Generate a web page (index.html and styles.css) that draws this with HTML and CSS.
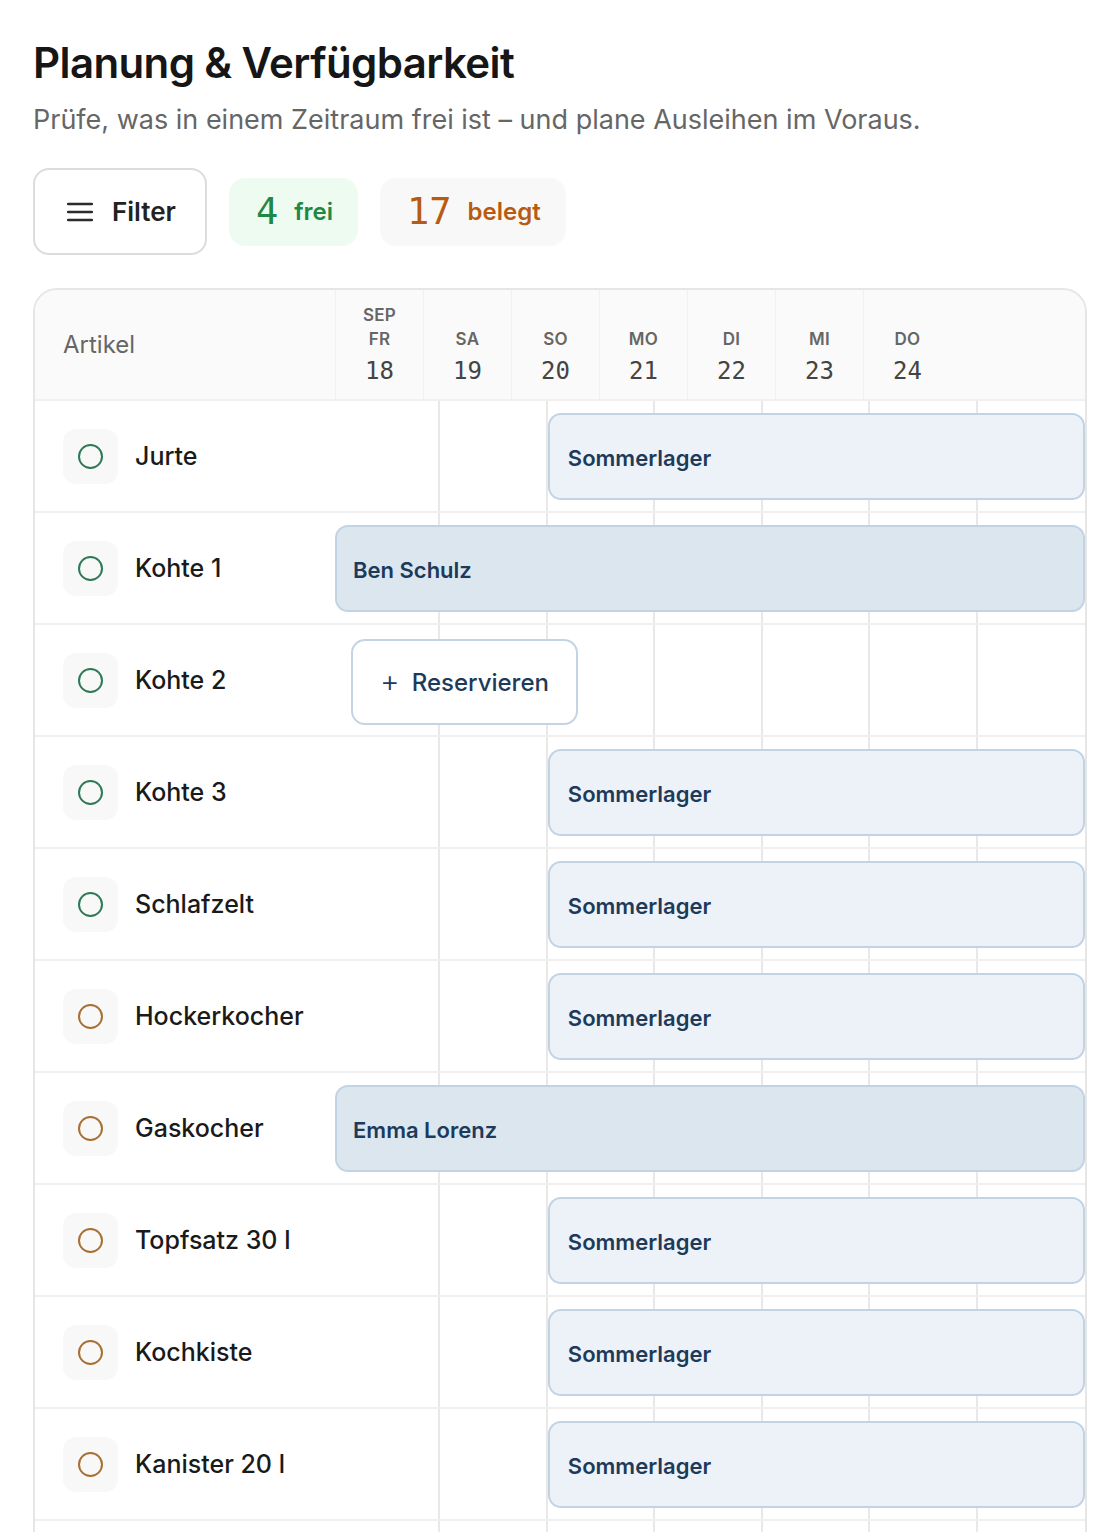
FILE: index.html
```html
<!DOCTYPE html>
<html lang="de">
<head>
<meta charset="utf-8">
<title>Planung &amp; Verfügbarkeit</title>
<link rel="stylesheet" href="styles.css">
</head>
<body>
<main class="page">
  <h1 class="title">Planung &amp; Verfügbarkeit</h1>
  <p class="subtitle">Prüfe, was in einem Zeitraum frei ist – und plane Ausleihen im Voraus.</p>

  <div class="toolbar">
    <button class="filter-btn" type="button">
      <svg class="menu-icon" width="26" height="20" viewBox="0 0 26 20" aria-hidden="true">
        <path d="M1 2h24M1 10h24M1 18h24" stroke="#2b2b2b" stroke-width="2.4" stroke-linecap="round" fill="none"/>
      </svg>
      <span>Filter</span>
    </button>
    <div class="stat stat-free"><span class="stat-num">4</span><span class="stat-label">frei</span></div>
    <div class="stat stat-busy"><span class="stat-num">17</span><span class="stat-label">belegt</span></div>
  </div>

  <section class="planner">
    <div class="planner-head">
      <div class="head-item">Artikel</div>
      <div class="head-day"><span class="mon">SEP</span><span class="wd">FR</span><span class="dn">18</span></div>
      <div class="head-day"><span class="wd">SA</span><span class="dn">19</span></div>
      <div class="head-day"><span class="wd">SO</span><span class="dn">20</span></div>
      <div class="head-day"><span class="wd">MO</span><span class="dn">21</span></div>
      <div class="head-day"><span class="wd">DI</span><span class="dn">22</span></div>
      <div class="head-day"><span class="wd">MI</span><span class="dn">23</span></div>
      <div class="head-day"><span class="wd">DO</span><span class="dn">24</span></div>
      <div class="head-rest"></div>
    </div>

    <div class="row">
      <div class="item"><span class="ico"><i class="ring ring-ok"></i></span><span class="name">Jurte</span></div>
      <div class="track">
        <i class="cell"></i><i class="cell"></i><i class="cell"></i><i class="cell"></i><i class="cell"></i><i class="cell"></i><i class="cell"></i>
        <div class="bar bar-event from-3">Sommerlager</div>
      </div>
    </div>

    <div class="row">
      <div class="item"><span class="ico"><i class="ring ring-ok"></i></span><span class="name">Kohte 1</span></div>
      <div class="track">
        <i class="cell"></i><i class="cell"></i><i class="cell"></i><i class="cell"></i><i class="cell"></i><i class="cell"></i><i class="cell"></i>
        <div class="bar bar-person from-1">Ben Schulz</div>
      </div>
    </div>

    <div class="row">
      <div class="item"><span class="ico"><i class="ring ring-ok"></i></span><span class="name">Kohte 2</span></div>
      <div class="track">
        <i class="cell"></i><i class="cell"></i><i class="cell"></i><i class="cell"></i><i class="cell"></i><i class="cell"></i><i class="cell"></i>
        <button class="reserve" type="button"><span class="plus">+</span>Reservieren</button>
      </div>
    </div>

    <div class="row">
      <div class="item"><span class="ico"><i class="ring ring-ok"></i></span><span class="name">Kohte 3</span></div>
      <div class="track">
        <i class="cell"></i><i class="cell"></i><i class="cell"></i><i class="cell"></i><i class="cell"></i><i class="cell"></i><i class="cell"></i>
        <div class="bar bar-event from-3">Sommerlager</div>
      </div>
    </div>

    <div class="row">
      <div class="item"><span class="ico"><i class="ring ring-ok"></i></span><span class="name">Schlafzelt</span></div>
      <div class="track">
        <i class="cell"></i><i class="cell"></i><i class="cell"></i><i class="cell"></i><i class="cell"></i><i class="cell"></i><i class="cell"></i>
        <div class="bar bar-event from-3">Sommerlager</div>
      </div>
    </div>

    <div class="row">
      <div class="item"><span class="ico"><i class="ring ring-warn"></i></span><span class="name">Hockerkocher</span></div>
      <div class="track">
        <i class="cell"></i><i class="cell"></i><i class="cell"></i><i class="cell"></i><i class="cell"></i><i class="cell"></i><i class="cell"></i>
        <div class="bar bar-event from-3">Sommerlager</div>
      </div>
    </div>

    <div class="row">
      <div class="item"><span class="ico"><i class="ring ring-warn"></i></span><span class="name">Gaskocher</span></div>
      <div class="track">
        <i class="cell"></i><i class="cell"></i><i class="cell"></i><i class="cell"></i><i class="cell"></i><i class="cell"></i><i class="cell"></i>
        <div class="bar bar-person from-1">Emma Lorenz</div>
      </div>
    </div>

    <div class="row">
      <div class="item"><span class="ico"><i class="ring ring-warn"></i></span><span class="name">Topfsatz 30 l</span></div>
      <div class="track">
        <i class="cell"></i><i class="cell"></i><i class="cell"></i><i class="cell"></i><i class="cell"></i><i class="cell"></i><i class="cell"></i>
        <div class="bar bar-event from-3">Sommerlager</div>
      </div>
    </div>

    <div class="row">
      <div class="item"><span class="ico"><i class="ring ring-warn"></i></span><span class="name">Kochkiste</span></div>
      <div class="track">
        <i class="cell"></i><i class="cell"></i><i class="cell"></i><i class="cell"></i><i class="cell"></i><i class="cell"></i><i class="cell"></i>
        <div class="bar bar-event from-3">Sommerlager</div>
      </div>
    </div>

    <div class="row">
      <div class="item"><span class="ico"><i class="ring ring-warn"></i></span><span class="name">Kanister 20 l</span></div>
      <div class="track">
        <i class="cell"></i><i class="cell"></i><i class="cell"></i><i class="cell"></i><i class="cell"></i><i class="cell"></i><i class="cell"></i>
        <div class="bar bar-event from-3">Sommerlager</div>
      </div>
    </div>

    <div class="row">
      <div class="item"></div>
      <div class="track">
        <i class="cell"></i><i class="cell"></i><i class="cell"></i><i class="cell"></i><i class="cell"></i><i class="cell"></i><i class="cell"></i>
      </div>
    </div>
  </section>
</main>
</body>
</html>
```

FILE: styles.css
```css
* { box-sizing: border-box; }

html, body {
  margin: 0;
  background: #ffffff;
}

body {
  font-family: Inter, "Noto Sans", "Liberation Sans", sans-serif;
  color: #1a1a1a;
}

.page {
  padding: 36px 33px 0 33px;
}

.title {
  margin: 0;
  font-size: 42px;
  line-height: 54px;
  font-weight: 600;
  letter-spacing: -0.6px;
  color: #161616;
}

.subtitle {
  margin: 12px 0 0;
  font-size: 27px;
  line-height: 36px;
  color: #666666;
  font-weight: 400;
}

/* toolbar: filter button + counters */
.toolbar {
  display: flex;
  align-items: center;
  gap: 22px;
  margin-top: 30px;
}

.filter-btn {
  display: flex;
  align-items: center;
  gap: 19px;
  height: 87px;
  padding: 0 29px 0 32px;
  border: 2px solid #dcdcdc;
  border-radius: 16px;
  background: #ffffff;
  font-family: inherit;
  font-size: 26px;
  font-weight: 600;
  color: #222222;
}

.stat {
  display: flex;
  align-items: center;
  gap: 16px;
  height: 68px;
  padding: 0 25px 0 27px;
  border-radius: 16px;
}

.stat-num {
  font-family: "DejaVu Sans Mono", "Liberation Mono", monospace;
  font-size: 37px;
  font-weight: 500;
  line-height: 1;
}

.stat-label {
  font-size: 24px;
  font-weight: 600;
}

.stat-free { background: #edfbf0; color: #1f8845; }
.stat-busy { background: #f8f8f8; color: #b85b12; }

/* planner table */
.planner {
  margin-top: 33px;
  border: 2px solid #e6e6e6;
  border-bottom: 0;
  border-radius: 24px 24px 0 0;
  overflow: hidden;
}

.planner-head {
  display: grid;
  grid-template-columns: 300px repeat(7, 88px) 1fr;
  height: 111px;
  background: #fafafa;
  border-bottom: 2px solid #f0f0f0;
}

.head-item {
  display: flex;
  align-items: center;
  padding-left: 28px;
  font-size: 24px;
  color: #666666;
}

.head-day {
  display: flex;
  flex-direction: column;
  align-items: center;
  justify-content: flex-end;
  padding-bottom: 14px;
  border-left: 1px solid #f0f0f0;
}

.head-day:last-of-type { border-right: 1px solid #f0f0f0; }

.mon, .wd {
  font-size: 17px;
  line-height: 24px;
  font-weight: 600;
  color: #666666;
  letter-spacing: 0.3px;
}

.dn {
  margin-top: 6px;
  font-family: "DejaVu Sans Mono", "Liberation Mono", monospace;
  font-size: 24px;
  line-height: 28px;
  color: #444444;
}

.row {
  display: grid;
  grid-template-columns: 298px 1fr;
  height: 112px;
  border-bottom: 2px solid #f0f0f0;
}

.item {
  display: flex;
  align-items: center;
  gap: 17px;
  padding-left: 28px;
}

.ico {
  display: flex;
  align-items: center;
  justify-content: center;
  width: 55px;
  height: 55px;
  border-radius: 13px;
  background: #f8f8f8;
}

.ring {
  width: 25px;
  height: 25px;
  border-radius: 50%;
  border: 2.5px solid;
}

.ring-ok { border-color: #2e7a55; }
.ring-warn { border-color: #a8712f; }

.name {
  font-size: 25px;
  font-weight: 500;
  color: #1a1a1a;
}

/* timeline: seven day cells with bars laid over them */
.track {
  display: grid;
  grid-template-columns: repeat(7, 1fr);
  grid-template-rows: 100%;
}

.cell {
  grid-row: 1;
  border-right: 2px solid #e8e8e8;
}

.cell:nth-of-type(1) { grid-column: 1; }
.cell:nth-of-type(2) { grid-column: 2; }
.cell:nth-of-type(3) { grid-column: 3; }
.cell:nth-of-type(4) { grid-column: 4; }
.cell:nth-of-type(5) { grid-column: 5; }
.cell:nth-of-type(6) { grid-column: 6; }
.cell:nth-of-type(7) { grid-column: 7; border-right: 0; }

.bar {
  grid-row: 1;
  grid-column-end: 8;
  align-self: stretch;
  margin: 12px 0 11px;
  display: flex;
  align-items: center;
  padding: 2px 0 0 18px;
  border: 2px solid #c2d3e3;
  border-radius: 13px;
  font-size: 22px;
  font-weight: 600;
  color: #1d3a5b;
}

.from-1 { grid-column-start: 1; margin-left: 2px; padding-left: 16px; }
.from-3 { grid-column-start: 3; }

.bar-event { background: #edf2f8; }
.bar-person { background: #dce6ef; }

.reserve {
  grid-row: 1;
  grid-column: 1 / 4;
  justify-self: start;
  align-self: start;
  margin: 14px 0 0 18px;
  width: 227px;
  height: 86px;
  display: flex;
  align-items: center;
  justify-content: center;
  gap: 12px;
  background: #ffffff;
  border: 2px solid #c4d4e4;
  border-radius: 14px;
  font-family: inherit;
  font-size: 24px;
  font-weight: 500;
  color: #1d3a5b;
}

.plus {
  font-size: 30px;
  font-weight: 300;
  line-height: 1;
  margin-top: -3px;
}
```
